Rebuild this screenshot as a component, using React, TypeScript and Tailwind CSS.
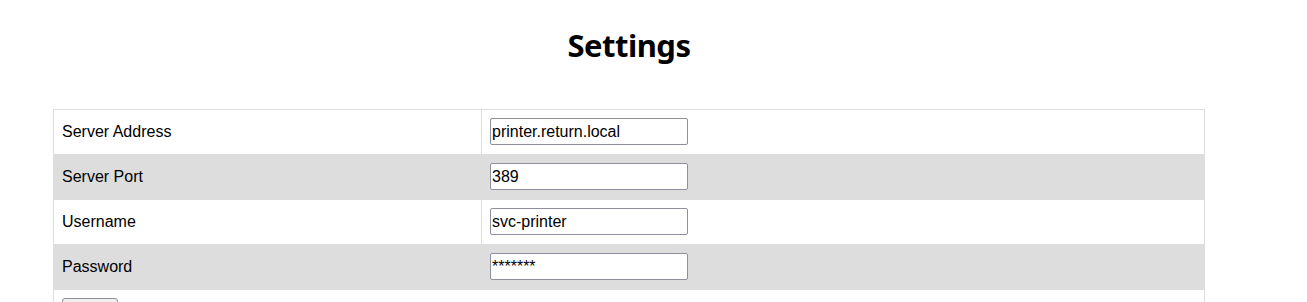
const rows = [
  { label: 'Server Address', value: 'printer.return.local', type: 'text' },
  { label: 'Server Port', value: '389', type: 'text' },
  { label: 'Username', value: 'svc-printer', type: 'text' },
  { label: 'Password', value: '*******', type: 'text' },
]

export default function App() {
  return (
    <div className="w-[1258px] px-[53px] bg-white font-['Liberation_Sans',Arial,sans-serif] text-black">
      <h1 className="pt-[25px] pb-[44px] text-center text-[31px] leading-[40px] font-bold font-['Noto_Sans',sans-serif] tracking-[-0.5px]">
        Settings
      </h1>
      <table className="w-full border-collapse border border-[#dddddd] text-[16px]">
        <tbody>
          {rows.map((row, i) => (
            <tr key={row.label} className={i % 2 === 1 ? 'bg-[#dddddd]' : 'bg-white'}>
              <td className="w-[428px] h-[45px] px-2 border border-[#dddddd]">{row.label}</td>
              <td className="h-[45px] px-2 pt-2 align-top border border-[#dddddd]">
                <input
                  type={row.type}
                  defaultValue={row.value}
                  className="block w-[198px] h-[27px] px-[1px] bg-white border border-[#8f8f9d] rounded-[2px] text-[16px] text-black outline-none"
                />
              </td>
            </tr>
          ))}
          <tr className="bg-white">
            <td colSpan={2} className="px-2 pt-[8px] pb-2 border border-[#dddddd]">
              <button className="h-[27px] px-3 bg-[#efefef] border border-[#8f8f9d] rounded-[3px] text-[13px]">
                Save
              </button>
            </td>
          </tr>
        </tbody>
      </table>
    </div>
  )
}
